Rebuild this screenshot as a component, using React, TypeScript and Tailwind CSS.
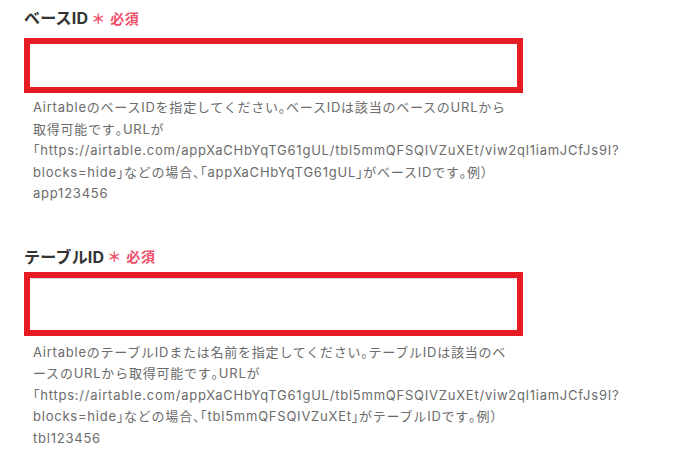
const font = { fontFamily: "Inter, 'Noto Sans CJK JP', sans-serif" };

// brackets and stops are set at half width, as the proportional punctuation in the source
function HelpText({ text }: { text: string }) {
  const parts = text.split(/([「」、。（）])/).filter(Boolean);
  return (
    <>
      {parts.map((part, i) =>
        /^[「」、。（）]$/.test(part) ? (
          <span key={i} className="[font-feature-settings:'halt']">
            {part}
          </span>
        ) : (
          <span key={i}>{part}</span>
        )
      )}
    </>
  );
}

function Field({
  label,
  help,
  boxHeight,
  labelClass,
  helpClass,
  inputClass,
}: {
  label: string;
  help: string;
  boxHeight: string;
  labelClass: string;
  helpClass: string;
  inputClass: string;
}) {
  return (
    <div>
      <div className={`flex items-center h-[22px] ${labelClass}`}>
        <span className="text-[16px] font-bold text-[#333333] tracking-[0.2px]">{label}</span>
        <span className="ml-[3px] text-[14px] font-bold text-[#f0506a]">＊</span>
        <span className="ml-[5px] text-[14px] font-bold text-[#f0506a] tracking-[0.6px]">必須</span>
      </div>
      <div className={`w-[499px] ${boxHeight} border-[6px] border-[#e51c23] bg-white`}>
        <div className={`h-full w-full rounded-[4px] bg-white ${inputClass}`} />
      </div>
      <p
        className={`w-[482px] pl-[9px] box-content text-[13px] leading-[21.5px] tracking-[0.77px] text-[#6b6b6b] ${helpClass}`}
      >
        <HelpText text={help} />
      </p>
    </div>
  );
}

export default function App() {
  return (
    <div lang="ja" className="w-[694px] h-[463px] bg-white pl-[24px] pt-[7px] overflow-hidden" style={font}>
      <Field
        label="ベースID"
        labelClass="mb-[9px]"
        boxHeight="h-[55px]"
        helpClass="mt-[4px]"
        inputClass=""
        help="AirtableのベースIDを指定してください。ベースIDは該当のベースのURLから取得可能です。URLが「https://airtable.com/appXaCHbYqTG61gUL/tbl5mmQFSQIVZuXEt/viw2ql1iamJCfJs9I?blocks=hide」などの場合、「appXaCHbYqTG61gUL」がベースIDです。例）app123456"
      />
      <Field
        label="テーブルID"
        labelClass="mt-[41px] mb-[4px]"
        boxHeight="h-[64px]"
        helpClass="mt-[6px]"
        inputClass="border-t border-[#d4d6dc]"
        help="AirtableのテーブルIDまたは名前を指定してください。テーブルIDは該当のベースのURLから取得可能です。URLが「https://airtable.com/appXaCHbYqTG61gUL/tbl5mmQFSQIVZuXEt/viw2ql1iamJCfJs9I?blocks=hide」などの場合、「tbl5mmQFSQIVZuXEt」がテーブルIDです。例）tbl123456"
      />
    </div>
  );
}
